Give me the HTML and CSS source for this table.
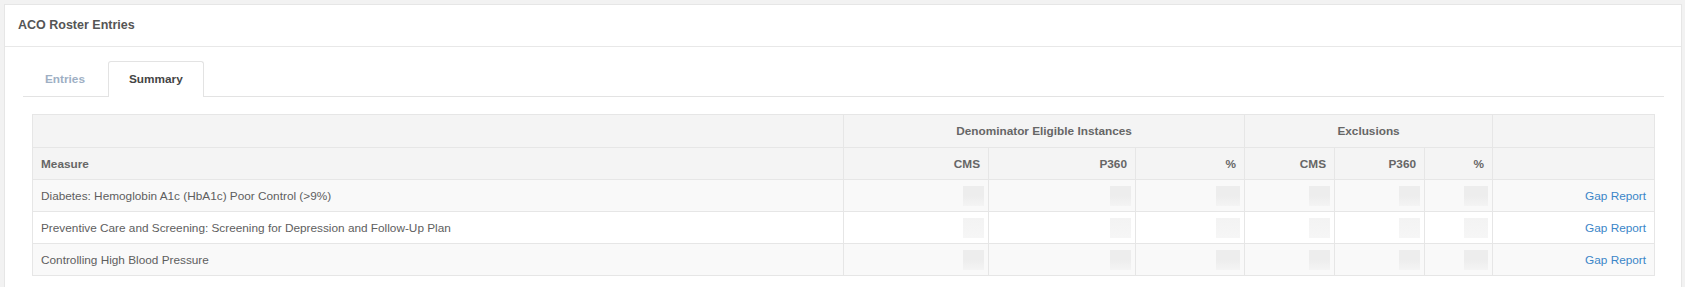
FILE: index.html
```html
<!DOCTYPE html>
<html>
<head>
<meta charset="utf-8">
<title>ACO Roster Entries</title>
<link rel="stylesheet" href="styles.css">
</head>
<body>
<div class="page">
  <div class="panel">
    <div class="panel-heading">ACO Roster Entries</div>
    <div class="panel-body">
      <ul class="tabs">
        <li class="tab">Entries</li>
        <li class="tab active">Summary</li>
      </ul>
      <div class="tab-content">
        <table class="summary">
          <colgroup>
            <col class="c-measure">
            <col class="c-d-cms">
            <col class="c-d-p360">
            <col class="c-d-pct">
            <col class="c-e-cms">
            <col class="c-e-p360">
            <col class="c-e-pct">
            <col class="c-gap">
          </colgroup>
          <thead>
            <tr>
              <th></th>
              <th colspan="3" class="center">Denominator Eligible Instances</th>
              <th colspan="3" class="center">Exclusions</th>
              <th></th>
            </tr>
            <tr>
              <th class="left">Measure</th>
              <th>CMS</th>
              <th>P360</th>
              <th>%</th>
              <th>CMS</th>
              <th>P360</th>
              <th>%</th>
              <th></th>
            </tr>
          </thead>
          <tbody>
            <tr class="odd">
              <td class="left">Diabetes: Hemoglobin A1c (HbA1c) Poor Control (&gt;9%)</td>
              <td><span class="blur"></span></td>
              <td><span class="blur"></span></td>
              <td><span class="blur wide"></span></td>
              <td><span class="blur"></span></td>
              <td><span class="blur"></span></td>
              <td><span class="blur wide"></span></td>
              <td><a class="link" href="#">Gap Report</a></td>
            </tr>
            <tr>
              <td class="left">Preventive Care and Screening: Screening for Depression and Follow-Up Plan</td>
              <td><span class="blur faint"></span></td>
              <td><span class="blur faint"></span></td>
              <td><span class="blur faint wide"></span></td>
              <td><span class="blur faint"></span></td>
              <td><span class="blur faint"></span></td>
              <td><span class="blur faint wide"></span></td>
              <td><a class="link" href="#">Gap Report</a></td>
            </tr>
            <tr class="odd">
              <td class="left">Controlling High Blood Pressure</td>
              <td><span class="blur"></span></td>
              <td><span class="blur"></span></td>
              <td><span class="blur wide"></span></td>
              <td><span class="blur"></span></td>
              <td><span class="blur"></span></td>
              <td><span class="blur wide"></span></td>
              <td><a class="link" href="#">Gap Report</a></td>
            </tr>
          </tbody>
        </table>
      </div>
    </div>
  </div>
</div>
</body>
</html>
```

FILE: styles.css
```css
html, body {
  margin: 0;
  padding: 0;
  background: #f2f2f2;
  font-family: "Liberation Sans", Arial, Helvetica, sans-serif;
  font-size: 11.8px;
  color: #555;
}

.page {
  padding: 4px 3px 0 4px;
}

.panel {
  background: #fff;
  border: 1px solid #e6e6e6;
}

.panel-heading {
  height: 41px;
  line-height: 40px;
  padding-left: 13px;
  font-size: 12.5px;
  font-weight: bold;
  color: #555;
  border-bottom: 1px solid #e8e8e8;
}

.panel-body {
  padding: 14px 17px 14px 18px;
}

.tabs {
  list-style: none;
  margin: 0;
  padding: 0;
  display: flex;
  gap: 2px;
  border-bottom: 1px solid #e3e3e3;
}

.tab {
  height: 34px;
  line-height: 35px;
  padding: 0 20px 0 21px;
  font-weight: bold;
  color: #9eafc4;
  border: 1px solid transparent;
  border-bottom: none;
  border-radius: 3px 3px 0 0;
  margin-bottom: -1px;
}

.tab.active {
  color: #444;
  background: #fff;
  border-color: #e3e3e3;
  height: 35px;
  padding: 0 20px;
}

.tab-content {
  padding: 17px 9px 0 9px;
}

.summary {
  width: 1623px;
  border-collapse: collapse;
  table-layout: fixed;
  border: 1px solid #e6e6e6;
}

.c-measure { width: 811px; }
.c-d-cms { width: 145px; }
.c-d-p360 { width: 147px; }
.c-d-pct { width: 109px; }
.c-e-cms { width: 90px; }
.c-e-p360 { width: 90px; }
.c-e-pct { width: 68px; }
.c-gap { width: 162px; }

.summary th,
.summary td {
  border: 1px solid #e6e6e6;
  padding: 0 8px;
  height: 31px;
  text-align: right;
  white-space: nowrap;
}

.summary thead tr:first-child th {
  height: 32px;
}

.summary th {
  background: #f4f4f4;
  color: #666;
  font-weight: bold;
}

.summary td {
  color: #5e5e5e;
}

.summary .left {
  text-align: left;
}

.summary .center {
  text-align: center;
}

.summary tbody tr {
  background: #fff;
}

.summary tbody tr.odd {
  background: #f9f9f9;
}

.blur {
  display: inline-block;
  width: 21px;
  height: 20px;
  vertical-align: middle;
  margin-right: -4px;
  background: linear-gradient(to bottom, #ededed 0%, #ededed 50%, #f4f4f4 100%);
}

.blur.wide {
  width: 24px;
}

.blur.faint {
  background: linear-gradient(to bottom, #f3f3f3 0%, #f6f6f6 100%);
}

.link {
  color: #3b86c8;
  text-decoration: none;
}
```
